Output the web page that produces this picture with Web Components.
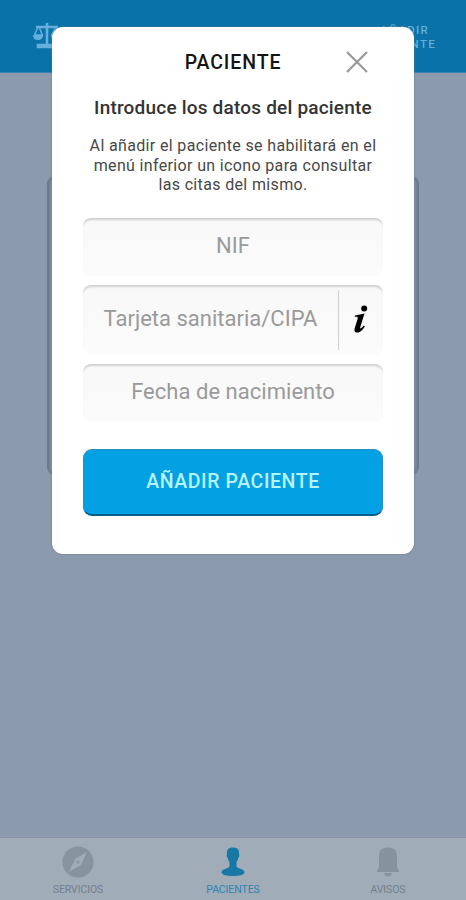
<!DOCTYPE html>
<html lang="es">
<head>
<meta charset="utf-8">
<title>Pacientes</title>
<style>
html,body{margin:0;height:100%;overflow:hidden}
body{font-family:Roboto,"Liberation Sans",sans-serif}
</style>
</head>
<body>
<app-screen></app-screen>
<script>
const define=(name,html)=>{
  const t=document.createElement('template');t.innerHTML=html;
  customElements.define(name,class extends HTMLElement{
    constructor(){super();this.attachShadow({mode:'open'}).append(t.content.cloneNode(true));}
  });
};

define('top-bar',`<style>
:host{display:flex;justify-content:space-between;box-sizing:border-box;height:73px;padding:23px 30px 0 33px;background:#0972a9;border-bottom:1px solid #3b83b1;color:#62b1d8}
svg{width:28px;height:26px}
div{font-size:11.5px;line-height:14px;font-weight:500;letter-spacing:1.3px;text-align:center}
</style>
<svg viewBox="0 0 28 26" fill="none" stroke="#65aede" stroke-width="2.600"><path d="M14 0V22M3 4H25M5 22H23V24H5Z"/><path d="M5 4L1.500 12H9.500L6 4M23 4L18.500 12H26.500L23 4" stroke-width="1.500"/><path d="M0 12H10Q10 17 5 17Q0 17 0 12ZM18 12H28Q28 17 23 17Q18 17 18 12Z" fill="#65aede" stroke="none"/></svg>
<div>AÑADIR<br>PACIENTE</div>`);

define('page-panel',`<style>
:host{display:block;flex:1;padding:103px 47px 0;background:#8b9aac}
div{height:299px;border-radius:8px;background:#8b9aac;border:solid #6b7a90;border-width:0 2px;box-shadow:inset 0 0 4px #53627a}
</style><div></div>`);

define('tab-item',`<style>
:host{display:flex;flex-direction:column;align-items:center;width:155px;color:#747f8c;font-size:10.5px;line-height:14px;letter-spacing:-.1px}
:host([active]){color:#2d83b0}
::slotted(svg){width:32px;height:32px;margin-bottom:5px}
</style><slot name="icon"></slot><span><slot></slot></span>`);

define('bottom-bar',`<style>
:host{display:flex;box-sizing:border-box;height:63px;padding:8px 0 0;justify-content:center;background:#a0acb8;border-top:1px solid #8793a2}
</style>
<tab-item><svg slot="icon" viewBox="0 0 32 32"><circle cx="16" cy="16" r="15.500" fill="#87939f"/><path d="M25 6L19 19L7 26L13 13Z" fill="#a0acb8"/><circle cx="16" cy="16" r="1.500" fill="#87939f"/></svg>SERVICIOS</tab-item>
<tab-item active><svg slot="icon" viewBox="0 0 32 32"><path d="M16 1.500C11 1.500 9.500 4 10 8C9.300 9 9.600 11 10.700 12C11 14 12 15 12.500 16V20.500C11 23 4.500 22.500 4.500 26.500C5 29 10 30 16 30S27 29 27.500 26.500C27.500 22.500 21 23 19.500 20.500V16C20 15 21 14 21.300 12C22.400 11 22.700 9 22 8C22.500 4 21 1.500 16 1.500Z" fill="#1778a6"/></svg>PACIENTES</tab-item>
<tab-item><svg slot="icon" viewBox="0 0 32 32"><path d="M16 1.500C9 1.500 7 5 7 11V21L5 25V26H27V25L25 21V11C25 5 23 1.500 16 1.500ZM12 27C13 31.500 19 31.500 20 27Z" fill="#87929f"/></svg>AVISOS</tab-item>`);

define('form-field',`<style>
:host{display:flex;box-sizing:border-box;height:58px;border-radius:8px;background:linear-gradient(#f8f8f8,#fafafa 70%,#fcfcfc);box-shadow:inset 0 3px 2px -1px #d0d0d0;color:#9a9a9a;font-size:22px;line-height:26px;letter-spacing:var(--track,.03px)}
span{flex:1;text-align:center;padding-top:var(--top,15px);white-space:nowrap}
</style><span><slot></slot></span><slot name="end"></slot>`);

define('info-mark',`<style>
:host{display:flex;justify-content:center;box-sizing:border-box;width:45px;height:60px;margin-top:5px;border-left:1.500px solid #cfcfcf}
svg{width:24px;height:32px;margin-top:14px}
</style><svg viewBox="0 0 24 32"><circle cx="15.200" cy="4.500" r="3"/><path d="M6 11.500L15.500 9.500L11.200 23.500C10.800 25.200 12 25 14.800 21.500L15.900 22.300C13.200 27 10.800 28.500 8.200 28.500C5.500 28.500 5 26.500 5.800 24L8.700 14.500C9 13 8.300 12.700 5.700 12.800Z"/></svg>`);

define('action-button',`<style>
:host{display:block;box-sizing:border-box;height:67px;border-radius:9px;background:#03a0e3;border:1px solid #278fbd;border-bottom:2px solid #075f87;color:#b5f3ff;text-align:center;font-size:19.5px;line-height:64px;font-weight:500;letter-spacing:.6px}
</style><slot></slot>`);

define('patient-dialog',`<style>
:host{display:block;box-sizing:border-box;width:362px;height:527px;border-radius:11px;background:#fff;padding:0 31px;text-align:center;box-shadow:0 0 2px #687c91}
header{display:grid;grid-template-columns:42px 1fr 42px;height:68px}
h1{grid-column:2;margin:23px 0 0;font-size:19.500px;line-height:26px;font-weight:500;letter-spacing:.9px;color:#151515}
header svg{width:24px;height:24px;margin:23px 0 0 4px}
h2{margin:0;font-size:19px;line-height:26px;font-weight:500;letter-spacing:.2px;color:#333;white-space:nowrap}
p{margin:15px -10px 23px;font-size:16px;line-height:19.500px;letter-spacing:.35px;color:#484848;white-space:nowrap}
form-field{margin-bottom:9px}
.card{height:70px;--top:21px;--track:0px}
action-button{margin-top:27px}
</style>
<header><h1>PACIENTE</h1><svg viewBox="0 0 24 24" stroke="#999" stroke-width="2.200"><path d="M2 2L22 22M22 2L2 22"/></svg></header>
<h2>Introduce los datos del paciente</h2>
<p>Al añadir el paciente se habilitará en el<br>menú inferior un icono para consultar<br>las citas del mismo.</p>
<form-field>NIF</form-field>
<form-field class="card">Tarjeta sanitaria/CIPA<info-mark slot="end"></info-mark></form-field>
<form-field>Fecha de nacimiento</form-field>
<action-button>AÑADIR PACIENTE</action-button>`);

define('app-screen',`<style>
:host{display:flex;flex-direction:column;position:relative;width:466px;height:900px;overflow:hidden}
patient-dialog{position:absolute;left:52px;top:27px}
</style><top-bar></top-bar><page-panel></page-panel><bottom-bar></bottom-bar><patient-dialog></patient-dialog>`);
</script>
</body>
</html>
